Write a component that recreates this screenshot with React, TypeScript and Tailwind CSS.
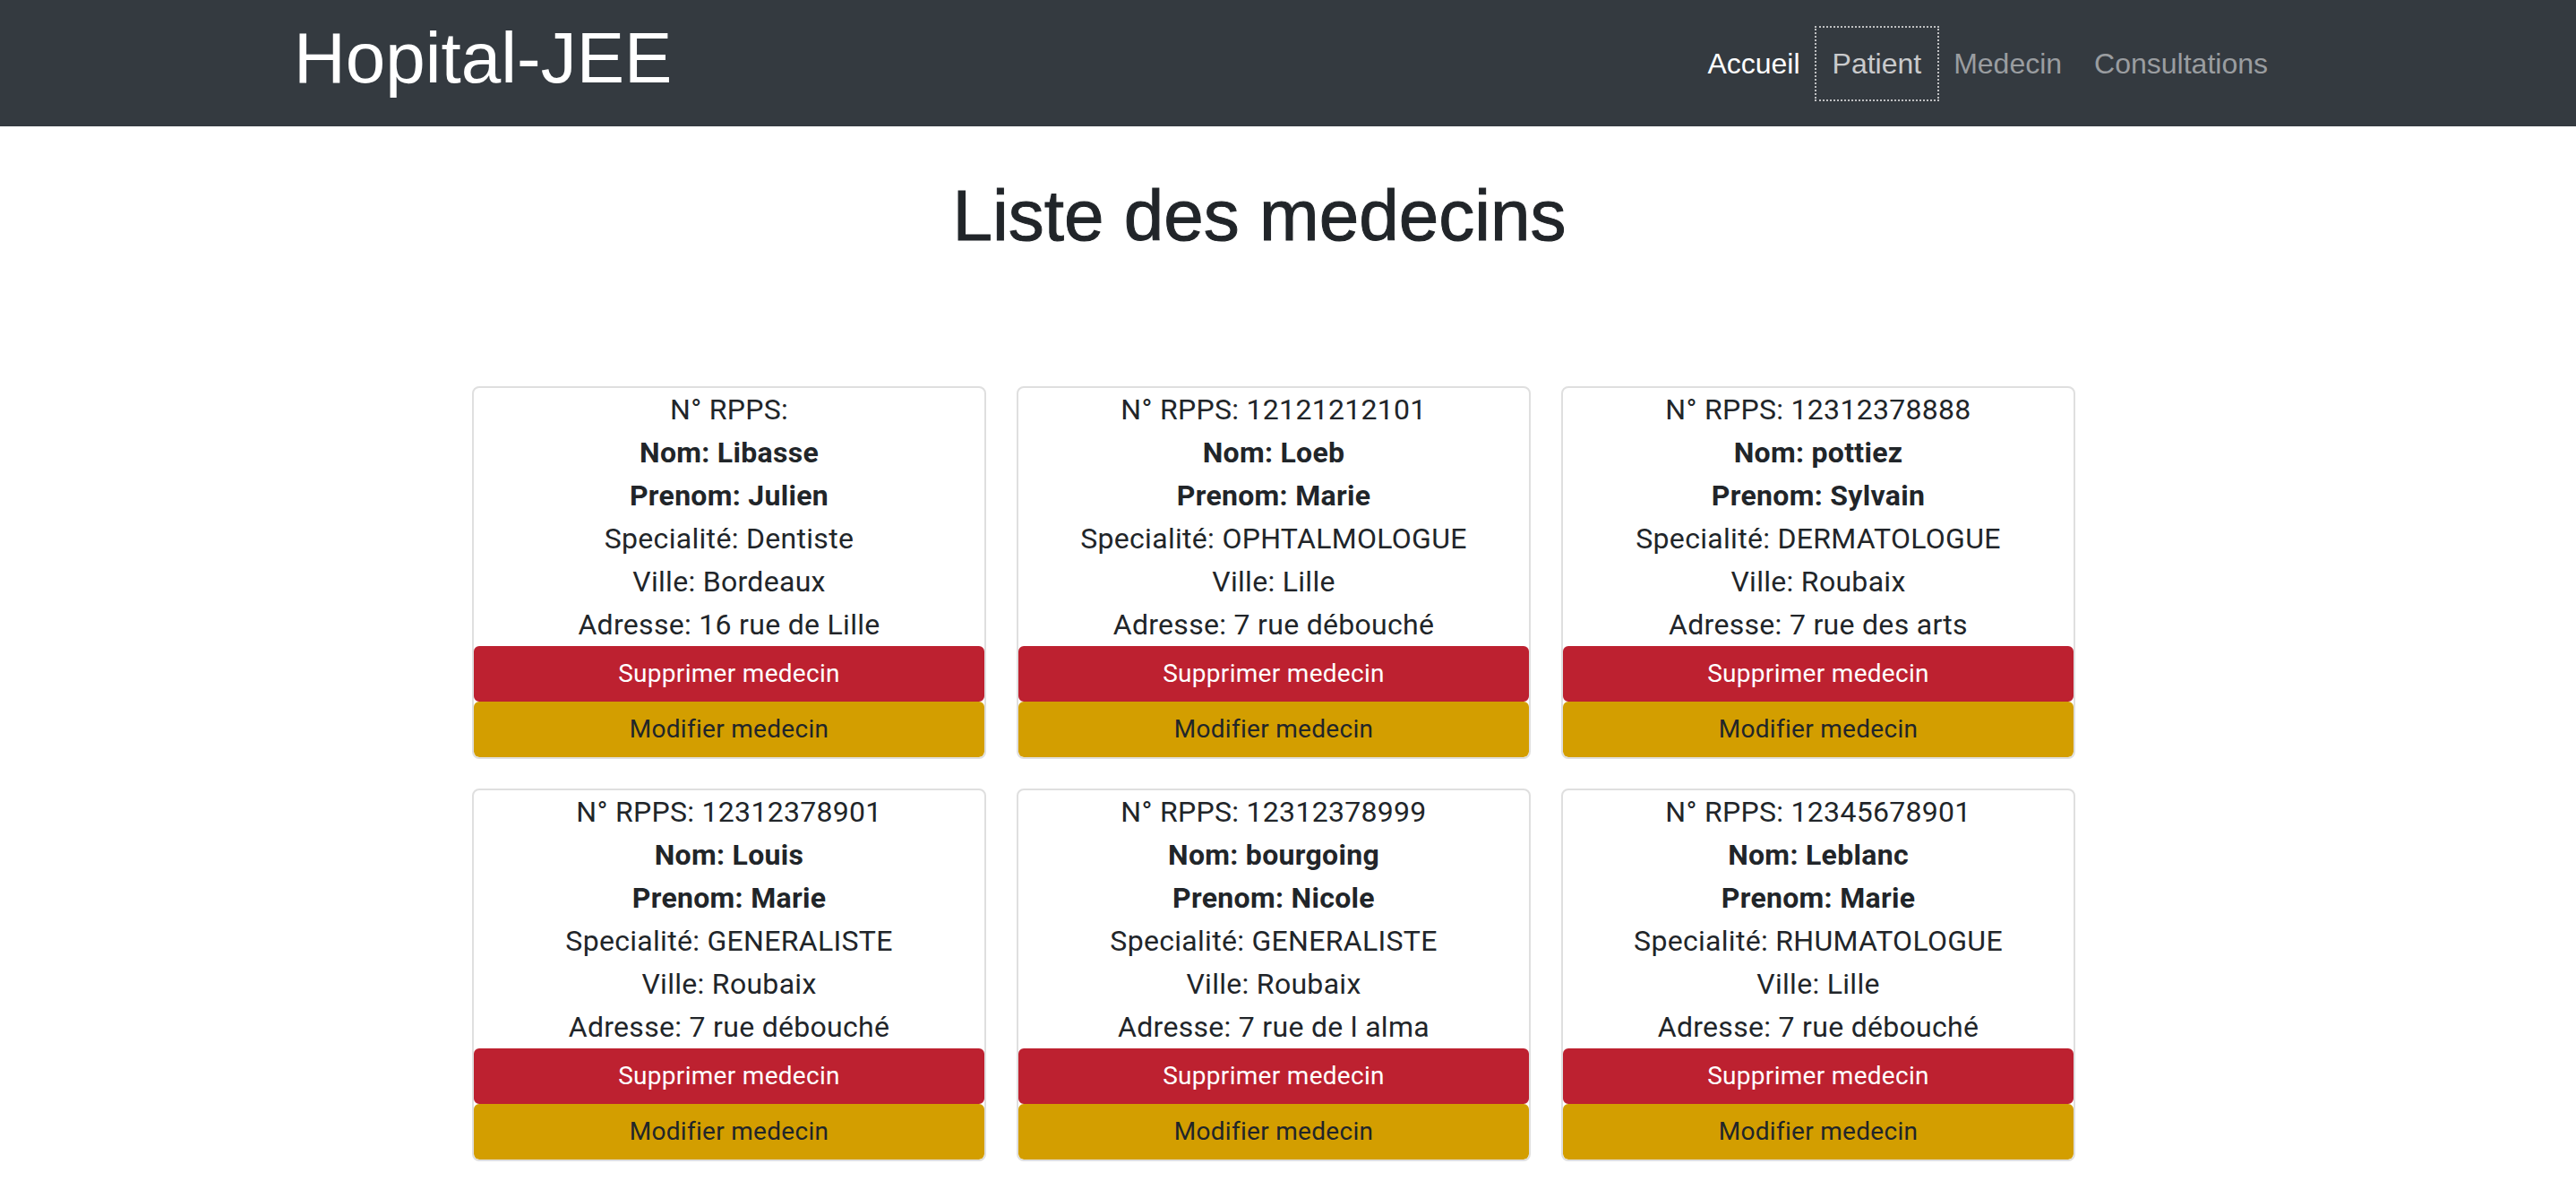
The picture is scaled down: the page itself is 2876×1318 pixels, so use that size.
const medecins = [
  { rpps: '', nom: 'Libasse', prenom: 'Julien', specialite: 'Dentiste', ville: 'Bordeaux', adresse: '16 rue de Lille' },
  { rpps: '12121212101', nom: 'Loeb', prenom: 'Marie', specialite: 'OPHTALMOLOGUE', ville: 'Lille', adresse: '7 rue débouché' },
  { rpps: '12312378888', nom: 'pottiez', prenom: 'Sylvain', specialite: 'DERMATOLOGUE', ville: 'Roubaix', adresse: '7 rue des arts' },
  { rpps: '12312378901', nom: 'Louis', prenom: 'Marie', specialite: 'GENERALISTE', ville: 'Roubaix', adresse: '7 rue débouché' },
  { rpps: '12312378999', nom: 'bourgoing', prenom: 'Nicole', specialite: 'GENERALISTE', ville: 'Roubaix', adresse: '7 rue de l alma' },
  { rpps: '12345678901', nom: 'Leblanc', prenom: 'Marie', specialite: 'RHUMATOLOGUE', ville: 'Lille', adresse: '7 rue débouché' },
];

type Medecin = (typeof medecins)[number];

function MedecinCard({ m }: { m: Medecin }) {
  return (
    <div className="flex flex-col overflow-hidden rounded-[8px] border-2 border-[#dfdfdf] bg-white text-center">
      <div className="text-[32px] leading-[48px] tracking-[0.3px]">
        <p>N° RPPS: {m.rpps}</p>
        <p className="font-bold">Nom: {m.nom}</p>
        <p className="font-bold">Prenom: {m.prenom}</p>
        <p>Specialité: {m.specialite}</p>
        <p>Ville: {m.ville}</p>
        <p>Adresse: {m.adresse}</p>
      </div>
      <button className="rounded-[6px] border-2 border-[#bd2130] bg-[#bd2130] px-[16px] py-[8px] text-[28px] leading-[42px] tracking-[0.3px] text-white">
        Supprimer medecin
      </button>
      <button className="rounded-[6px] border-2 border-[#d39e00] bg-[#d39e00] px-[16px] py-[8px] text-[28px] leading-[42px] tracking-[0.3px] text-[#212529]">
        Modifier medecin
      </button>
    </div>
  );
}

export default function App() {
  return (
    <div className="min-h-screen bg-white font-['Roboto',sans-serif] text-[#212529]">
      {/* Navbar */}
      <nav className="h-[141px] bg-[#343a40]">
        <div className="mx-auto flex w-[2220px] items-start justify-between">
          <a className="mt-[17px] font-['Liberation_Sans',Arial,sans-serif] text-[80px] leading-[96px] text-white">
            Hopital-JEE
          </a>
          <ul className="-mr-[2px] mt-[31px] flex font-['Liberation_Sans',Arial,sans-serif] text-[32px] leading-[48px]">
            <li><a className="block px-[18px] py-[16px] text-white">Accueil</a></li>
            <li>
              <a className="block px-[18px] py-[16px] text-[#c9cacc] outline-2 outline-offset-0 outline-[#bfc0c2] outline-dotted">
                Patient
              </a>
            </li>
            <li><a className="block px-[18px] py-[16px] text-[#9a9da0]">Medecin</a></li>
            <li><a className="block px-[18px] py-[16px] text-[#9a9da0]">Consultations</a></li>
          </ul>
        </div>
      </nav>

      {/* Titre */}
      <div className="mt-[52px] flex justify-center pr-[64px]">
        <h1 className="font-['Liberation_Sans',Arial,sans-serif] text-[80px] leading-[96px] [-webkit-text-stroke:1px_#212529]">
          Liste des medecins
        </h1>
      </div>

      {/* Liste */}
      <div className="mt-[142px] flex justify-center pr-[32px] pb-[25px]">
        <div className="grid w-[1790px] grid-cols-3 gap-x-[34px] gap-y-[33px]">
          {medecins.map((m, i) => (
            <MedecinCard key={i} m={m} />
          ))}
        </div>
      </div>
    </div>
  );
}
